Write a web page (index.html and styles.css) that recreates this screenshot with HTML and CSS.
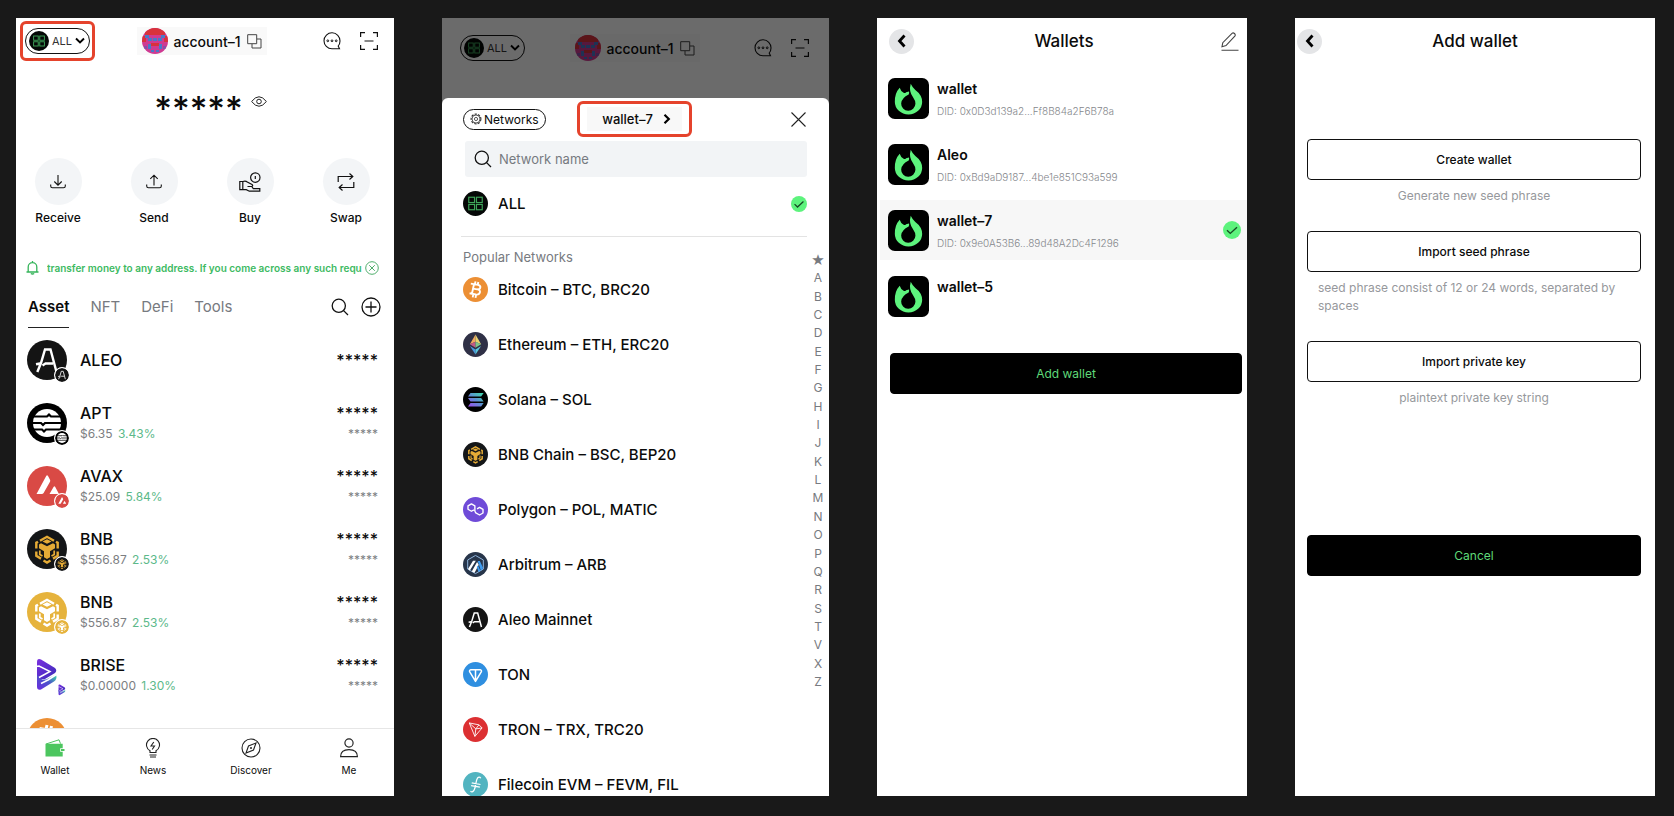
FILE: index.html
```html
<!DOCTYPE html>
<html lang="en">
<head>
<meta charset="utf-8">
<title>Wallet screens</title>
<link rel="stylesheet" href="styles.css">
</head>
<body>
<svg class="sprite" aria-hidden="true">
  <defs>
    <linearGradient id="g-sol" x1="0" y1="1" x2="1" y2="0"><stop offset="0" stop-color="#a04bf0"/><stop offset=".5" stop-color="#5b8fd0"/><stop offset="1" stop-color="#3fe0a8"/></linearGradient>
    <linearGradient id="g-brise" x1="0" y1="0" x2="1" y2="1"><stop offset="0" stop-color="#7a2fe0"/><stop offset="1" stop-color="#3a2bb8"/></linearGradient>
    <linearGradient id="g-brise2" x1="0" y1="1" x2="1" y2="0"><stop offset="0" stop-color="#6a2be0"/><stop offset=".55" stop-color="#4a55c8"/><stop offset="1" stop-color="#3ee0a8"/></linearGradient>
    <clipPath id="c-avatar"><circle cx="13" cy="13" r="13"/></clipPath>
  </defs>
  <symbol id="i-all" viewBox="0 0 26 26"><circle cx="13" cy="13" r="13" fill="#050807"/><g fill="none" stroke="#3fa65a" stroke-width="1.2"><rect x="6" y="6.500" width="6" height="5.500"/><rect x="14" y="6.500" width="6" height="5.500"/><rect x="6" y="14" width="6" height="5.500"/><rect x="14" y="14" width="6" height="5.500"/></g></symbol>
  <symbol id="i-down" viewBox="0 0 10 8"><path d="M1 1.500l4 4 4-4" fill="none" stroke="#000" stroke-width="1.900"/></symbol>
  <symbol id="i-avatar" viewBox="0 0 26 26"><g clip-path="url(#c-avatar)"><path fill="#cf3a92" d="M0 0h26v26H0z"/><path fill="#d8323c" d="M3 0h20v7H3zM0 8h4v6H0zM22 8h4v6h-4zM9 15h8v3H9z"/><path fill="#4a78c8" d="M3 7h4v3h3v3H6v-3H3zM23 7h-4v3h-3v3h4v-3h3zM11 10h4v3h-4zM6 16h3v5H6zM17 16h3v5h-3zM9 22h3v2H9zM14 22h3v2h-3z"/><path fill="#8a4ea8" d="M2 18h3v3H2zM21 18h3v3h-3z"/></g></symbol>
  <symbol id="i-copy" viewBox="0 0 15 15"><path d="M.7.700h9v9h-9zM10 5h4v9H5v-4" fill="none" stroke="#444"/></symbol>
  <symbol id="i-chat" viewBox="0 0 18 18"><path d="M16.500 16.800H9A8 8 0 1 1 17 9c0 2-.6 3.600-1.800 5z" fill="none" stroke="#111" stroke-width="1.100"/><g fill="none" stroke="#111"><circle cx="4.800" cy="8.800" r=".9"/><circle cx="9" cy="8.800" r=".9"/><circle cx="13.200" cy="8.800" r=".9"/></g></symbol>
  <symbol id="i-scan" viewBox="0 0 18 18"><path d="M.6 5V.7H5M13 .7h4.400V5M17.400 13v4.300H13M5 17.300H.6V13M4.500 9h9" fill="none" stroke="#111" stroke-width="1.200"/></symbol>
  <symbol id="i-eye" viewBox="0 0 16 11"><path d="M.6 5.500Q8-4 15.400 5.500 8 15 .6 5.500z" fill="none" stroke="#222"/><circle cx="8" cy="5.500" r="2.300" fill="none" stroke="#222"/></symbol>
  <symbol id="i-receive" viewBox="0 0 16 16"><path d="M8 1v10M4.300 7.500L8 11.200l3.700-3.700M.7 10.500v1.500q0 1.800 1.800 1.800h11q1.800 0 1.800-1.800v-1.500" fill="none" stroke="#111" stroke-width="1.100"/></symbol>
  <symbol id="i-send" viewBox="0 0 16 16"><path d="M8 11.500V1.200M4.300 4.900L8 1.200l3.700 3.700M.7 10.500v1.500q0 1.800 1.800 1.800h11q1.800 0 1.800-1.800v-1.500" fill="none" stroke="#111" stroke-width="1.100"/></symbol>
  <symbol id="i-buy" viewBox="0 0 22 20"><g fill="none" stroke="#111" stroke-width="1.200"><circle cx="16.300" cy="5.600" r="4.700"/><path d="M16.300 4v3M.8 9.500h3v8.200h-3zM3.800 9.500q3-.8 4.500.5l4.700 2.500q1.500 1.300-.3 2H8.500M3.800 17.700h3.500l3 1.500h10.500v-2.500h-6.500l-1.600-2.200"/></g></symbol>
  <symbol id="i-swap" viewBox="0 0 18 18"><path d="M1.200 9V3.500h14.500M12.500.5l3.300 3-3.300 3M16.800 9v5.500H2.200M5.500 17.500l-3.300-3 3.300-3" fill="none" stroke="#111" stroke-width="1.200"/></symbol>
  <symbol id="i-bell" viewBox="0 0 13 14"><path d="M.5 11h12M2.200 11V6a4.300 4.300 0 0 1 8.600 0v5M4.800 12.500q1.700 1 3.400 0M6.500 0v1.500" fill="none" stroke="#35b45a" stroke-width="1.300"/></symbol>
  <symbol id="i-cancel" viewBox="0 0 14 14"><circle cx="7" cy="7" r="6.300" fill="none" stroke="#4fae6c"/><path d="M4.200 4.200l5.600 5.600M9.800 4.200L4.200 9.800" stroke="#4fae6c"/></symbol>
  <symbol id="i-search" viewBox="0 0 18 18"><circle cx="7.800" cy="7.800" r="6.600" fill="none" stroke="#111" stroke-width="1.300"/><path d="M12.600 12.600l4.400 4.400" stroke="#111" stroke-width="1.300"/></symbol>
  <symbol id="i-plus" viewBox="0 0 20 20"><circle cx="10" cy="10" r="9" fill="none" stroke="#111" stroke-width="1.300"/><path d="M10 4.500v11M4.500 10h11" stroke="#111" stroke-width="1.300"/></symbol>
  <symbol id="i-aleo" viewBox="0 0 40 40"><circle cx="20" cy="20" r="20" fill="#141414"/><path d="M10.300 32l3.700-9 4-13.500h5.500L29.500 32M9 24.300l4-.8M15.500 25.500l3-2H26" fill="none" stroke="#fff" stroke-width="2.400"/></symbol>
  <symbol id="i-apt" viewBox="0 0 40 40"><circle cx="20" cy="20" r="20"/><circle cx="20" cy="20" r="14" fill="#fff"/><path d="M5 13.500h15l2-2 2 2h11M5 20h9l2 2 2-2h17M5 26.500h10l2 2 2-2h16" fill="none" stroke="#000" stroke-width="2.200"/></symbol>
  <symbol id="i-avax" viewBox="0 0 40 40"><circle cx="20" cy="20" r="20" fill="#d94a45"/><path d="M9.500 28L19.200 10q.9-1.300 1.800 0l2 3.700q.5 1 0 2L16.600 27q-.6 1-1.800 1zM22.500 28l4.200-7.200q.7-1 1.400 0L32 28z" fill="#fff"/></symbol>
  <symbol id="m-bnb" viewBox="0 0 40 40"><path d="M13 11.800L20 7.800l7 4M9.300 19.500v-5.800l1.700-1M30.700 19.500v-5.800l-1.700-1M9.300 22.500v4.300l4.700 2.800M30.700 22.500v4.300L26 29.600M16.500 31.500l3.500 2 3.500-2" fill="none" stroke="currentColor" stroke-width="2.400"/><path d="M12.800 21.500v4l2.700 1.600M27.200 21.500v4l-2.700 1.600" fill="none" stroke="currentColor" stroke-width="1.700"/><path d="M15.500 12.500l4.500-2.300 4.500 2.300L20 14.800zM14 14.300l6 3 6-3 2 1.200v3.800l-5 2.900v6L20 30l-3-1.800v-6l-5-2.900v-3.800z" fill="currentColor"/></symbol>
  <symbol id="i-bnb" viewBox="0 0 40 40"><circle cx="20" cy="20" r="20" fill="#141618"/><use href="#m-bnb" color="#e5ab36"/></symbol>
  <symbol id="i-bnb2" viewBox="0 0 40 40"><circle cx="20" cy="20" r="20" fill="#e6b33c"/><use href="#m-bnb" color="#fff"/></symbol>
  <symbol id="i-brise" viewBox="0 0 40 40"><path d="M10 7q0-4 4-2.500l14 8.500q2.500 2.500 0 5l-10 6H10z" fill="url(#g-brise)"/><path d="M10 20l5 4.500h4l10-5q1.500 4.500-2 7L14 34.500q-4 1-4-3z" fill="url(#g-brise2)"/><path d="M9 11.500l3-.5 11 5.500-11 6M14 28.500l7-3.500 8.500-5.500" fill="none" stroke="#fff" stroke-width="1.500"/></symbol>
  <symbol id="i-btc" viewBox="0 0 40 40"><circle cx="20" cy="20" r="20" fill="#ec8f34"/><path d="M12.500 10.500l11.500 2q4.500 1.200 3.700 4.200-.8 3.300-5 3l-6.500-1M22.500 19.500q5.500 1.200 4.600 5-1 4.300-6.600 3.500l-10-2M17.500 12l-3.400 15.500M20 7l-1 4.500M24.500 8l-1 4.500M16.500 27.500l-1 5M21 28.300l-1 5" fill="none" stroke="#fff" stroke-width="3"/></symbol>
  <symbol id="i-eth" viewBox="0 0 40 40"><circle cx="20" cy="20" r="20" fill="#2f3046"/><path d="M20 4l-9 15.500 9-4z" fill="#f0a860"/><path d="M20 4l9 15.500-9-4z" fill="#e8d270"/><path d="M11 19.500l9-4V25z" fill="#c05a86"/><path d="M29 19.500l-9-4V25z" fill="#7fc48a"/><path d="M11 22.500l9 5.300V36z" fill="#4a9ae0"/><path d="M29 22.500l-9 5.300V36z" fill="#58c8e0"/></symbol>
  <symbol id="i-sol" viewBox="0 0 40 40"><circle cx="20" cy="20" r="20"/><path d="M12 9.500h21l-4 5.500H8zM8 17.500h21l4 5.500H12zM12 25.500h21L29 31H8z" fill="url(#g-sol)"/></symbol>
  <symbol id="i-pol" viewBox="0 0 40 40"><circle cx="20" cy="20" r="20" fill="#6f4bd8"/><path d="M17.500 20.500l-4 2.300-5.500-3.200v-5.400l5.500-3.200 5.500 3.200v8.600M22.500 19l4-2.300 5.500 3.200v5.700l-5.500 3.200-6-3.300-1.500-2.700" fill="none" stroke="#fff" stroke-width="2.200" stroke-linejoin="round"/></symbol>
  <symbol id="i-arb" viewBox="0 0 40 40"><circle cx="20" cy="20" r="20" fill="#27354a"/><path d="M20 5.500l12.500 7.200v14.600L20 34.500 7.500 27.300V12.700z" fill="none" stroke="#8fb4dc" stroke-width="1.600"/><path d="M8 27l8-13h4.500L11 29.500zM14 31l8.500-15 2.700 4.500L18.500 33z" fill="#fff"/><path d="M23.500 14.500H27L32 25l-1 3-2.500 1.500zM22 24l2-2.500 4 8.500-3 1.800z" fill="#3f9cf0"/></symbol>
  <symbol id="i-ton" viewBox="0 0 40 40"><circle cx="20" cy="20" r="20" fill="#2f8fe0"/><path d="M12.500 12.500h15q3 .5 1.700 3.300L20 31l-9.200-15.200q-1.300-2.800 1.700-3.300zM20 12.500V30" fill="none" stroke="#fff" stroke-width="2.400" stroke-linejoin="round"/></symbol>
  <symbol id="i-tron" viewBox="0 0 40 40"><circle cx="20" cy="20" r="20" fill="#dc3032"/><path d="M10 9.500l15.500 3 5 5L19 31zM10 9.500l10.500 9.500L19 31M20.500 19l5-6.500M20.500 19l10-1.500" fill="none" stroke="#fff" stroke-width="1.400" stroke-linejoin="round"/></symbol>
  <symbol id="i-fil" viewBox="0 0 40 40"><circle cx="20" cy="20" r="20" fill="#52b4c0"/><path d="M28.500 10q-2.500-3.500-5.500 0-1.500 2-2.500 9t-3 10.500q-3 4-5.500 1M14 17.500l14 2.500M13 21.800l14 2.500" fill="none" stroke="#fff" stroke-width="2"/></symbol>
  <symbol id="i-wallet" viewBox="0 0 20 18"><path d="M1 5L14 .8l1.500 3.800" fill="none" stroke="#4cc65f"/><path d="M.5 4.800h17.200v4.400h-2.500v3.600h2.500v4.700H.5zM16 10h3.500v2H16z" fill="#4cc65f"/></symbol>
  <symbol id="i-news" viewBox="0 0 16 20"><path d="M5 14.500v-1.800A6.500 6.500 0 1 1 11 12.700v1.800zM4.500 17h7M5 19h6M8.800 4L6 8h3.500L7.200 11.500" fill="none" stroke="#222" stroke-width="1.100"/></symbol>
  <symbol id="i-discover" viewBox="0 0 20 20"><circle cx="10" cy="10" r="9" fill="none" stroke="#222" stroke-width="1.100"/><path d="M15 5l-2.500 7-7.500 3 2.500-7z" fill="none" stroke="#222" stroke-width="1.100"/><circle cx="10" cy="10" r="1" fill="#222"/></symbol>
  <symbol id="i-me" viewBox="0 0 18 19"><circle cx="9" cy="4.800" r="3.900" fill="none" stroke="#222" stroke-width="1.100"/><path d="M1 17.700q0-6.700 8-6.700t8 6.700z" fill="none" stroke="#222" stroke-width="1.100"/></symbol>
  <symbol id="i-gear" viewBox="0 0 12 12"><circle cx="6" cy="6" r="4.900" fill="none" stroke="#333" stroke-width="1.100" stroke-dasharray="2.300 1.200"/><circle cx="6" cy="6" r="4" fill="none" stroke="#333" stroke-width=".8"/><circle cx="6" cy="6" r="1.600" fill="none" stroke="#333" stroke-width=".8"/></symbol>
  <symbol id="i-right" viewBox="0 0 8 10"><path d="M1.500.8L5.800 5 1.500 9.200" fill="none" stroke="#000" stroke-width="2.200"/></symbol>
  <symbol id="i-left" viewBox="0 0 10 14"><path d="M7.500 1.500L2.500 7l5 5.500" fill="none" stroke="#000" stroke-width="2.800"/></symbol>
  <symbol id="i-x" viewBox="0 0 15 15"><path d="M.5.500l14 14M14.500.5l-14 14" stroke="#222" stroke-width="1.100"/></symbol>
  <symbol id="i-check" viewBox="0 0 18 18"><circle cx="9" cy="9" r="9" fill="#5df37d"/><path d="M4 9.200l3.300 3.200 6.700-6.200" fill="none" stroke="#174a24" stroke-width="1.400"/></symbol>
  <symbol id="i-edit" viewBox="0 0 18 19"><path d="M.5 18.300h17M1 14.700l.8-4L11 1.300q1.200-1 2.500.2t.3 2.600L5 13.600z" fill="none" stroke="#444" stroke-width="1.100"/></symbol>
  <symbol id="i-flame" viewBox="0 0 42 42"><rect width="42" height="42" rx="7"/><path d="M12 10q1.200 4 4 5.200 1.500.7 2.500-.7l3-.7q.5 1.500-.3 3.200-7.200 3.500-7.700 9a7.300 7.300 0 0 0 14.600.5q0-3.500-2.300-6.500Q21 14 23.300 6q1.500 3.500 4.700 6.300 7 5.200 7 12.200a14 12.800 0 0 1-28 0Q6.800 15.500 12 10z" fill="#5df37d"/></symbol>
</svg>

<main class="board">
  <section class="phone home" aria-label="Home">
    <header class="top">
      <button class="pill marked"><svg class="s20"><use href="#i-all"/></svg>ALL<svg class="caret"><use href="#i-down"/></svg></button>
      <button class="account"><svg class="s26"><use href="#i-avatar"/></svg>account–1<svg class="s15"><use href="#i-copy"/></svg></button>
      <div class="tools"><button aria-label="Messages"><svg class="s18"><use href="#i-chat"/></svg></button><button aria-label="Scan"><svg class="s18"><use href="#i-scan"/></svg></button></div>
    </header>
    <div class="balance"><span>*****</span><button aria-label="Show balance"><svg class="eye"><use href="#i-eye"/></svg></button></div>
    <div class="actions">
      <button><i><svg class="s16"><use href="#i-receive"/></svg></i>Receive</button>
      <button><i><svg class="s16"><use href="#i-send"/></svg></i>Send</button>
      <button><i><svg class="hand"><use href="#i-buy"/></svg></i>Buy</button>
      <button><i><svg class="s18"><use href="#i-swap"/></svg></i>Swap</button>
    </div>
    <div class="notice"><svg class="bell"><use href="#i-bell"/></svg><p>transfer money to any address. If you come across any such requ</p><button aria-label="Dismiss"><svg class="s14"><use href="#i-cancel"/></svg></button></div>
    <div class="tabs">
      <button class="on">Asset</button><button>NFT</button><button>DeFi</button><button>Tools</button>
      <div class="find"><button aria-label="Search"><svg class="s18"><use href="#i-search"/></svg></button><button aria-label="Add"><svg class="s20"><use href="#i-plus"/></svg></button></div>
    </div>
    <ul class="assets">
      <li><span class="coin"><svg><use href="#i-aleo"/></svg><svg class="badge"><use href="#i-aleo"/></svg></span><div><b>ALEO</b></div><div class="val"><b>*****</b></div></li>
      <li><span class="coin"><svg><use href="#i-apt"/></svg><svg class="badge"><use href="#i-apt"/></svg></span><div><b>APT</b><small>$6.35 <em>3.43%</em></small></div><div class="val"><b>*****</b><small>*****</small></div></li>
      <li><span class="coin"><svg><use href="#i-avax"/></svg><svg class="badge"><use href="#i-avax"/></svg></span><div><b>AVAX</b><small>$25.09 <em>5.84%</em></small></div><div class="val"><b>*****</b><small>*****</small></div></li>
      <li><span class="coin"><svg><use href="#i-bnb"/></svg><svg class="badge"><use href="#i-bnb"/></svg></span><div><b>BNB</b><small>$556.87 <em>2.53%</em></small></div><div class="val"><b>*****</b><small>*****</small></div></li>
      <li><span class="coin"><svg><use href="#i-bnb2"/></svg><svg class="badge"><use href="#i-bnb2"/></svg></span><div><b>BNB</b><small>$556.87 <em>2.53%</em></small></div><div class="val"><b>*****</b><small>*****</small></div></li>
      <li><span class="coin"><svg><use href="#i-brise"/></svg><svg class="badge"><use href="#i-brise"/></svg></span><div><b>BRISE</b><small>$0.00000 <em>1.30%</em></small></div><div class="val"><b>*****</b><small>*****</small></div></li>
      <li><span class="coin"><svg><use href="#i-btc"/></svg></span></li>
    </ul>
    <nav class="bar">
      <a href="#"><svg class="s20"><use href="#i-wallet"/></svg>Wallet</a>
      <a href="#"><svg class="s20"><use href="#i-news"/></svg>News</a>
      <a href="#"><svg class="s20"><use href="#i-discover"/></svg>Discover</a>
      <a href="#"><svg class="s20"><use href="#i-me"/></svg>Me</a>
    </nav>
  </section>

  <section class="phone picker" aria-label="Select network">
    <header class="top dim">
      <button class="pill"><svg class="s20"><use href="#i-all"/></svg>ALL<svg class="caret"><use href="#i-down"/></svg></button>
      <button class="account"><svg class="s26"><use href="#i-avatar"/></svg>account–1<svg class="s15"><use href="#i-copy"/></svg></button>
      <div class="tools"><button aria-label="Messages"><svg class="s18"><use href="#i-chat"/></svg></button><button aria-label="Scan"><svg class="s18"><use href="#i-scan"/></svg></button></div>
    </header>
    <div class="sheet">
      <div class="sheet-head">
        <button class="networks"><svg class="gear"><use href="#i-gear"/></svg>Networks</button>
        <button class="current marked">wallet–7<svg class="next"><use href="#i-right"/></svg></button>
        <button class="close" aria-label="Close"><svg class="s15"><use href="#i-x"/></svg></button>
      </div>
      <label class="search"><svg class="s18"><use href="#i-search"/></svg><input type="text" placeholder="Network name" aria-label="Network name"></label>
      <button class="all"><svg class="s25"><use href="#i-all"/></svg>ALL<svg class="tick"><use href="#i-check"/></svg></button>
      <div class="cols">
        <div class="popular">
          <h3>Popular Networks</h3>
          <ul>
            <li><svg class="s25"><use href="#i-btc"/></svg>Bitcoin – BTC, BRC20</li>
            <li><svg class="s25"><use href="#i-eth"/></svg>Ethereum – ETH, ERC20</li>
            <li><svg class="s25"><use href="#i-sol"/></svg>Solana – SOL</li>
            <li><svg class="s25"><use href="#i-bnb"/></svg>BNB Chain – BSC, BEP20</li>
            <li><svg class="s25"><use href="#i-pol"/></svg>Polygon – POL, MATIC</li>
            <li><svg class="s25"><use href="#i-arb"/></svg>Arbitrum – ARB</li>
            <li><svg class="s25"><use href="#i-aleo"/></svg>Aleo Mainnet</li>
            <li><svg class="s25"><use href="#i-ton"/></svg>TON</li>
            <li><svg class="s25"><use href="#i-tron"/></svg>TRON – TRX, TRC20</li>
            <li><svg class="s25"><use href="#i-fil"/></svg>Filecoin EVM – FEVM, FIL</li>
          </ul>
        </div>
        <nav class="index" aria-label="Index"><a href="#" class="star">★</a><a href="#">A</a><a href="#">B</a><a href="#">C</a><a href="#">D</a><a href="#">E</a><a href="#">F</a><a href="#">G</a><a href="#">H</a><a href="#">I</a><a href="#">J</a><a href="#">K</a><a href="#">L</a><a href="#">M</a><a href="#">N</a><a href="#">O</a><a href="#">P</a><a href="#">Q</a><a href="#">R</a><a href="#">S</a><a href="#">T</a><a href="#">V</a><a href="#">X</a><a href="#">Z</a></nav>
      </div>
    </div>
  </section>

  <section class="phone wallets" aria-label="Wallets">
    <header class="title"><button class="back" aria-label="Back"><svg><use href="#i-left"/></svg></button><h2>Wallets</h2><button class="edit" aria-label="Edit"><svg><use href="#i-edit"/></svg></button></header>
    <ul class="wallet-list">
      <li><svg class="logo"><use href="#i-flame"/></svg><div><b>wallet</b><small>DID: 0x0D3d139a2...Ff8B84a2F6B78a</small></div></li>
      <li><svg class="logo"><use href="#i-flame"/></svg><div><b>Aleo</b><small>DID: 0xBd9aD9187...4be1e851C93a599</small></div></li>
      <li class="sel"><svg class="logo"><use href="#i-flame"/></svg><div><b>wallet–7</b><small>DID: 0x9e0A53B6...89d48A2Dc4F1296</small></div><svg class="s18"><use href="#i-check"/></svg></li>
      <li><svg class="logo"><use href="#i-flame"/></svg><div><b>wallet–5</b><small></small></div></li>
    </ul>
    <button class="btn solid">Add wallet</button>
  </section>

  <section class="phone add" aria-label="Add wallet">
    <header class="title"><button class="back" aria-label="Back"><svg><use href="#i-left"/></svg></button><h2>Add wallet</h2></header>
    <div class="choices">
      <button class="btn">Create wallet</button>
      <p>Generate new seed phrase</p>
      <button class="btn">Import seed phrase</button>
      <p>seed phrase consist of 12 or 24 words, separated by spaces</p>
      <button class="btn">Import private key</button>
      <p>plaintext private key string</p>
    </div>
    <button class="btn solid">Cancel</button>
  </section>
</main>
</body>
</html>
```
FILE: styles.css
```css
* { box-sizing: border-box; }
body {
  margin: 0;
  background: #191919;
  color: #0b0b0b;
  font-family: Inter, "Liberation Sans", sans-serif;
  font-size: 14px;
}
button { border: 0; padding: 0; background: none; color: inherit; font: inherit; }
a { color: inherit; text-decoration: none; }
ul { list-style: none; margin: 0; padding: 0; }
h2, h3, p { margin: 0; }
svg { display: block; flex: none; }
.sprite { position: absolute; width: 0; height: 0; }

.s14 { width: 14px; height: 14px; }
.s15 { width: 15px; height: 15px; }
.s16 { width: 16px; height: 16px; }
.s18 { width: 18px; height: 18px; }
.s20 { width: 20px; height: 20px; }
.s25 { width: 25px; height: 25px; }
.s26 { width: 26px; height: 26px; }

.board {
  display: grid;
  grid-template-columns: 378fr 387fr 370fr 360fr;
  gap: 48px;
  height: 100vh;
  padding: 18px 19px 20px 16px;
}
.phone {
  display: flex;
  flex-direction: column;
  min-width: 0;
  min-height: 0;
  overflow: hidden;
  background: #fff;
}

/* Header shared by the home and picker screens */
.top {
  display: grid;
  grid-template-columns: 1fr auto 1fr;
  align-items: center;
  padding: 9px 16px 0 9px;
}
.pill {
  display: flex;
  align-items: center;
  justify-self: start;
  gap: 3px;
  height: 26px;
  padding: 0 4px 0 3px;
  border: 1px solid #111;
  border-radius: 13px;
  color: #333;
  font-size: 11px;
}
.caret { width: 10px; height: 8px; }
.account {
  display: flex;
  align-items: center;
  gap: 6px;
  height: 28px;
  padding: 0 5px;
  background: #f9f9f9;
  font-size: 14px;
  font-weight: 500;
}
.tools { display: flex; justify-self: end; gap: 19px; }
.marked { position: relative; }
.marked::after {
  content: "";
  position: absolute;
  inset: -8px -6px;
  border: 3px solid #e5432c;
  border-radius: 6px;
}

/* Home */
.balance {
  display: flex;
  align-items: center;
  justify-content: center;
  gap: 8px;
  height: 103px;
  padding: 0 0 10px 11px;
  font-size: 34px;
  font-weight: 500;
}
.balance span { height: 20px; line-height: 34px; }
.eye { width: 16px; height: 11px; }
.actions { display: flex; justify-content: space-between; padding: 0 18px 0 12px; }
.actions button {
  display: flex;
  flex-direction: column;
  align-items: center;
  gap: 5px;
  width: 60px;
  font-size: 12px;
  font-weight: 500;
  line-height: 16px;
}
.actions i {
  display: grid;
  place-items: center;
  width: 47px;
  height: 47px;
  border-radius: 50%;
  background: #f3f5f7;
}
.hand { width: 22px; height: 20px; }
.notice {
  display: flex;
  align-items: center;
  height: 20px;
  margin-top: 32px;
  padding: 0 15px 0 10px;
  color: #3dba62;
  font-size: 10px;
  font-weight: 600;
}
.bell { width: 13px; height: 14px; margin-right: 8px; }
.notice p { flex: 1; overflow: hidden; white-space: nowrap; }
.tabs {
  display: flex;
  align-items: flex-start;
  gap: 21px;
  margin-top: 18px;
  padding: 0 13px 0 12px;
  color: #777a80;
  font-size: 15px;
  line-height: 22px;
}
.tabs .on {
  padding-bottom: 9px;
  border-bottom: 1px solid #222;
  color: #0b0b0b;
  font-weight: 600;
}
.find { display: flex; align-items: center; gap: 12px; height: 22px; margin-left: auto; }
.assets { flex: 1; min-height: 0; overflow: hidden; }
.assets li { display: flex; align-items: center; gap: 13px; height: 63px; padding: 0 16px 0 11px; }
.coin { position: relative; width: 40px; height: 40px; }
.coin svg { width: 40px; height: 40px; }
.coin .badge {
  position: absolute;
  right: -3px;
  bottom: -3px;
  width: 16px;
  height: 16px;
  border: 1px solid #fff;
  border-radius: 50%;
  background: #fff;
}
.assets b { display: block; font-size: 16px; font-weight: 500; line-height: 22px; }
.assets small { display: block; color: #7c7e82; font-size: 12px; line-height: 20px; }
.assets em { margin-left: 2px; color: #5cb98a; font-style: normal; }
.assets .val { margin-left: auto; text-align: right; }
.bar {
  display: flex;
  justify-content: space-between;
  height: 68px;
  padding: 9px 10px 0 4px;
  border-top: 1px solid #e6e6e6;
}
.bar a {
  display: flex;
  flex-direction: column;
  align-items: center;
  gap: 4px;
  width: 70px;
  font-size: 10px;
  line-height: 16px;
}

/* Network picker */
.picker { background: #6b6b6b; }
.dim { position: relative; height: 80px; padding: 0 20px 20px 18px; background: #fff; }
.dim::after { content: ""; position: absolute; inset: 0; background: rgba(0, 0, 0, .58); }
.sheet {
  display: flex;
  flex: 1;
  flex-direction: column;
  min-height: 0;
  overflow: hidden;
  border-radius: 6px 6px 0 0;
  background: #fff;
}
.sheet-head {
  display: grid;
  grid-template-columns: 1fr auto 1fr;
  align-items: center;
  padding: 9px 23px 0 21px;
}
.networks {
  display: flex;
  align-items: center;
  justify-self: start;
  gap: 2px;
  height: 21px;
  padding: 0 6px;
  border: 1px solid #111;
  border-radius: 11px;
  font-size: 12px;
}
.gear { width: 12px; height: 12px; }
.current {
  display: flex;
  align-items: center;
  gap: 10px;
  height: 24px;
  padding: 0 11px 0 15px;
  background: #f8f8f8;
  font-size: 13px;
  font-weight: 500;
}
.current::after { inset: -6px -10px; }
.next { width: 8px; height: 10px; }
.close { justify-self: end; }
.search {
  display: flex;
  align-items: center;
  gap: 7px;
  height: 36px;
  margin: 10px 22px 0 23px;
  padding: 0 9px;
  border-radius: 3px;
  background: #f2f4f6;
}
.search input {
  flex: 1;
  min-width: 0;
  padding: 0;
  border: 0;
  background: none;
  font: inherit;
  font-size: 13px;
}
.search input::placeholder { color: #767a80; opacity: 1; }
.all {
  display: flex;
  align-items: center;
  gap: 10px;
  height: 60px;
  margin: 0 22px 0 19px;
  padding: 0 0 6px 2px;
  border-bottom: 1px solid #e3e3e3;
  font-size: 15px;
  font-weight: 500;
}
.tick { width: 16px; height: 16px; margin-left: auto; }
.cols { display: flex; flex: 1; min-height: 0; }
.popular { flex: 1; padding-left: 21px; }
.popular h3 { padding-top: 10px; color: #777a80; font-size: 13px; font-weight: 400; line-height: 20px; }
.popular li {
  display: flex;
  align-items: center;
  gap: 10px;
  height: 55px;
  font-size: 15px;
  font-weight: 500;
}
.popular ul { margin-top: -5px; }
.index {
  display: flex;
  flex-direction: column;
  justify-content: space-between;
  width: 22px;
  margin: 14px 0 105px;
  color: #777a80;
  font-size: 12px;
  line-height: 18px;
  text-align: center;
}
.star { font-family: "DejaVu Sans", sans-serif; font-size: 15px; }

/* Wallet screens */
.title {
  display: grid;
  grid-template-columns: 1fr auto 1fr;
  align-items: center;
  height: 50px;
  padding: 0 8px 4px 12px;
}
.title h2 { font-size: 17px; font-weight: 500; }
.back {
  display: grid;
  place-items: center;
  width: 25px;
  height: 25px;
  border-radius: 50%;
  background: #e4e5e7;
}
.back svg { width: 10px; height: 14px; }
.edit { justify-self: end; }
.edit svg { width: 18px; height: 19px; }
.wallet-list { display: grid; gap: 6px; padding-left: 3px; }
.wallet-list li { display: flex; align-items: center; gap: 8px; height: 60px; padding: 0 6px 0 8px; }
.wallet-list .sel { background: #f7f7f7; }
.wallet-list .s18 { margin-left: auto; }
.logo { width: 41px; height: 41px; }
.wallet-list b { display: block; padding-top: 4px; font-size: 14px; font-weight: 600; line-height: 22px; }
.wallet-list small { display: block; height: 22px; color: #85878c; font-size: 10px; font-weight: 300; line-height: 22px; }
.btn {
  height: 41px;
  border: 1px solid #111;
  border-radius: 4px;
  font-size: 12px;
  font-weight: 500;
}
.solid { border-color: #000; background: #000; color: #5fd979; font-weight: 400; }
.wallets .btn { margin: 27px 5px 0 13px; }
.add .title { padding: 0 2px 4px; }
.choices { display: flex; flex-direction: column; padding: 71px 14px 0 12px; }
.choices p {
  align-self: center;
  padding: 7px 11px 0;
  color: #96989c;
  font-size: 12px;
  line-height: 18px;
}
.choices p + .btn { margin-top: 26px; }
.add .solid { margin: 128px 14px 0 12px; }
```
